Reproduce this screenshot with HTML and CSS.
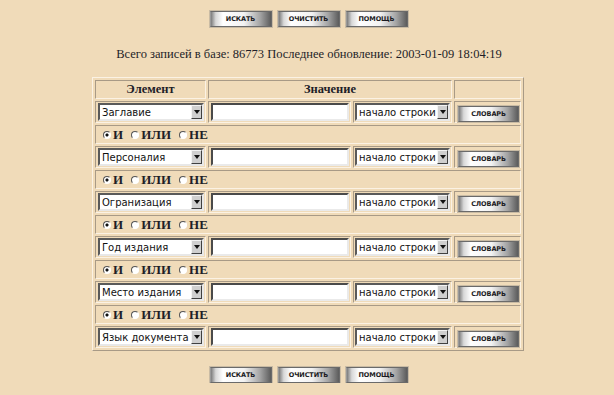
FILE: index.html
```html
<!DOCTYPE html>
<html lang="ru">
<head>
  <meta charset="UTF-8" />
  <title>Поиск по базе</title>
  <link rel="stylesheet" href="styles.css">
</head>
<body>
  <div class="page">
    <div class="buttons">
      <span class="btn">ИСКАТЬ</span>
      <span class="btn">ОЧИСТИТЬ</span>
      <span class="btn">ПОМОЩЬ</span>
    </div>

    <p class="info">Всего записей в базе: 86773 Последнее обновление: 2003-01-09 18:04:19</p>

    <table class="search">
      <colgroup>
        <col class="c-elem"><col class="c-val"><col class="c-mode"><col class="c-dict">
      </colgroup>
      <tr class="head">
        <th>Элемент</th>
        <th colspan="2">Значение</th>
        <th></th>
      </tr>

      <tr class="sel">
        <td><div class="select wide"><span class="val">Заглавие</span><span class="arrow"></span></div></td>
        <td><div class="input"></div></td>
        <td><div class="select"><span class="val">начало строки</span><span class="arrow"></span></div></td>
        <td><span class="btn small">СЛОВАРЬ</span></td>
      </tr>
      <tr class="logic">
        <td colspan="4"><span class="radio on"></span>И<span class="radio"></span>ИЛИ<span class="radio"></span>НЕ</td>
      </tr>

      <tr class="sel">
        <td><div class="select wide"><span class="val">Персоналия</span><span class="arrow"></span></div></td>
        <td><div class="input"></div></td>
        <td><div class="select"><span class="val">начало строки</span><span class="arrow"></span></div></td>
        <td><span class="btn small">СЛОВАРЬ</span></td>
      </tr>
      <tr class="logic">
        <td colspan="4"><span class="radio on"></span>И<span class="radio"></span>ИЛИ<span class="radio"></span>НЕ</td>
      </tr>

      <tr class="sel">
        <td><div class="select wide"><span class="val">Огранизация</span><span class="arrow"></span></div></td>
        <td><div class="input"></div></td>
        <td><div class="select"><span class="val">начало строки</span><span class="arrow"></span></div></td>
        <td><span class="btn small">СЛОВАРЬ</span></td>
      </tr>
      <tr class="logic">
        <td colspan="4"><span class="radio on"></span>И<span class="radio"></span>ИЛИ<span class="radio"></span>НЕ</td>
      </tr>

      <tr class="sel">
        <td><div class="select wide"><span class="val">Год издания</span><span class="arrow"></span></div></td>
        <td><div class="input"></div></td>
        <td><div class="select"><span class="val">начало строки</span><span class="arrow"></span></div></td>
        <td><span class="btn small">СЛОВАРЬ</span></td>
      </tr>
      <tr class="logic">
        <td colspan="4"><span class="radio on"></span>И<span class="radio"></span>ИЛИ<span class="radio"></span>НЕ</td>
      </tr>

      <tr class="sel">
        <td><div class="select wide"><span class="val">Место издания</span><span class="arrow"></span></div></td>
        <td><div class="input"></div></td>
        <td><div class="select"><span class="val">начало строки</span><span class="arrow"></span></div></td>
        <td><span class="btn small">СЛОВАРЬ</span></td>
      </tr>
      <tr class="logic">
        <td colspan="4"><span class="radio on"></span>И<span class="radio"></span>ИЛИ<span class="radio"></span>НЕ</td>
      </tr>

      <tr class="sel">
        <td><div class="select wide"><span class="val">Язык документа</span><span class="arrow"></span></div></td>
        <td><div class="input"></div></td>
        <td><div class="select"><span class="val">начало строки</span><span class="arrow"></span></div></td>
        <td><span class="btn small">СЛОВАРЬ</span></td>
      </tr>
    </table>

    <div class="buttons bottom">
      <span class="btn">ИСКАТЬ</span>
      <span class="btn">ОЧИСТИТЬ</span>
      <span class="btn">ПОМОЩЬ</span>
    </div>
  </div>
</body>
</html>
```

FILE: styles.css
```css
body {
  margin: 0;
  background-color: #f0dbb9;
  color: #1e1e28;
  font-family: 'Liberation Serif', serif;
}

.page {
  padding-top: 11px;
  display: flex;
  flex-direction: column;
  align-items: center;
}

.buttons {
  display: flex;
  gap: 6px;
  padding-left: 3px;
}

.buttons.bottom {
  margin-top: 16px;
}

.btn {
  display: inline-flex;
  align-items: center;
  justify-content: center;
  box-sizing: border-box;
  width: 62px;
  height: 16px;
  border: 1px solid #6a6a6a;
  border-left-color: #9a9a9a;
  background: linear-gradient(90deg, #7c7c7c 0, #d8d8d8 8%, #ffffff 20%, #f2f2f2 55%, #a4a4a4 82%, #5c5c5c 100%);
  box-shadow: 0 0 0 1px #c9bba4;
  font-family: 'DejaVu Sans', sans-serif;
  font-size: 6.5px;
  font-weight: bold;
  color: #1a1a22;
  letter-spacing: -0.1px;
}

.btn.small {
  width: 61px;
  height: 16px;
  margin-left: 2px;
}

.info {
  margin: 19px 0 0;
  font-size: 12.5px;
  line-height: 16px;
  padding-left: 4px;
}

.search {
  margin-top: 15px;
  margin-left: 2px;
  table-layout: fixed;
  border-collapse: separate;
  border-spacing: 2px;
  border: 1px solid;
  border-color: #fbf2e4 #a89a86 #a89a86 #fbf2e4;
}

.c-elem { width: 110px; }
.c-val { width: 141px; }
.c-mode { width: 99px; }
.c-dict { width: 66px; }

.search th,
.search td {
  border: 1px solid;
  border-color: #a89a86 #fbf2e4 #fbf2e4 #a89a86;
  padding: 0 1px;
  vertical-align: middle;
}

.head th {
  height: 17px;
  font-size: 12.5px;
  font-weight: bold;
  text-align: center;
}

.sel td {
  height: 20px;
}

.logic td {
  height: 17px;
  font-family: 'Liberation Serif', serif;
  font-size: 13px;
  font-weight: bold;
  padding-left: 1px;
}

.select {
  display: flex;
  align-items: center;
  box-sizing: border-box;
  height: 18px;
  background: #fff;
  border: 2px solid;
  border-color: #5a5a5a #e8e8e8 #e8e8e8 #5a5a5a;
  font-family: 'DejaVu Sans', sans-serif;
  font-size: 10px;
  color: #111;
}

.select .val {
  flex: 1;
  padding-left: 2px;
  white-space: nowrap;
  overflow: hidden;
}

.select .arrow {
  width: 11px;
  height: 14px;
  box-sizing: border-box;
  background: #cfcfcf;
  border: 1px solid;
  border-color: #f4f4f4 #404040 #404040 #f4f4f4;
  display: flex;
  align-items: center;
  justify-content: center;
}

.select .arrow::after {
  content: '';
  border-left: 3px solid transparent;
  border-right: 3px solid transparent;
  border-top: 4px solid #111;
}

.select.wide {
  width: 106px;
  margin-left: 1px;
}

.input {
  box-sizing: border-box;
  height: 18px;
  margin-left: 1px;
  width: 138px;
  background: #fff;
  border: 2px solid;
  border-color: #4a4a4a #eaeaea #eaeaea #4a4a4a;
}

.radio {
  display: inline-block;
  box-sizing: border-box;
  width: 8px;
  height: 8px;
  margin: 0 2px 0 8px;
  border-radius: 50%;
  border: 1.5px solid;
  border-color: #555 #fff #fff #555;
  background: #fff;
  vertical-align: 0;
}

.radio.on {
  margin-left: 6px;
  background: radial-gradient(circle, #111 0, #111 1.3px, #fff 1.8px);
}
```
